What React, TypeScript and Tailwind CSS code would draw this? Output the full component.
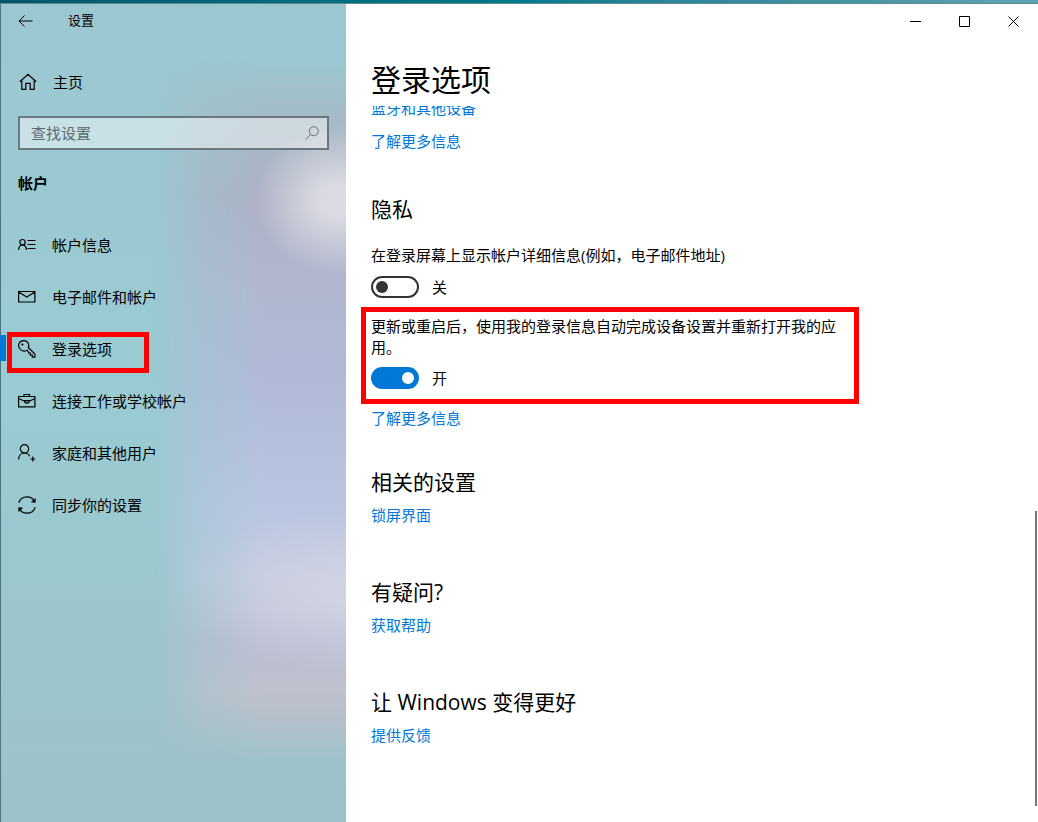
import { ReactNode, useState } from "react";

const navItems = [
  { label: "帐户信息", icon: <AccountIcon /> },
  { label: "电子邮件和帐户", icon: <MailIcon /> },
  { label: "登录选项", icon: <KeyIcon />, active: true },
  { label: "连接工作或学校帐户", icon: <BriefcaseIcon /> },
  { label: "家庭和其他用户", icon: <FamilyIcon /> },
  { label: "同步你的设置", icon: <SyncIcon /> },
];

function Icon({ children }: { children: ReactNode }) {
  return (
    <svg
      width="18"
      height="18"
      viewBox="0 0 18 18"
      fill="none"
      stroke="currentColor"
      strokeWidth="1.2"
      aria-hidden="true"
      className="shrink-0"
    >
      {children}
    </svg>
  );
}

function AccountIcon() {
  return (
    <Icon>
      <circle cx="4.5" cy="6.2" r="2.7" />
      <path d="M.6 14c0-2.800 1.600-5.100 3.900-5.100S8.400 11.200 8.400 14M9.500 4.500h8M9.500 8.500h8M9.500 12.500h8" />
    </Icon>
  );
}

function MailIcon() {
  return (
    <Icon>
      <path d="M.6 3.500h16.300v10.500H.6zM.6 4 8.800 9l8.100-5" />
    </Icon>
  );
}

function KeyIcon() {
  return (
    <Icon>
      <path d="M9.300 10.200c-3 1.500-6.200.7-7.800-1.900C-.2 5.600.800 2.300 3.400 1.100c2.700-1.300 5.900-.2 7 2.500.5 1.400.4 2.700-.1 3.900l6.600 6.600v3h-2.600v-2h-1.900v-2h-1.400z" />
      <circle cx="4.400" cy="4.600" r="1.100" fill="currentColor" stroke="none" />
    </Icon>
  );
}

function BriefcaseIcon() {
  return (
    <Icon>
      <path d="M.6 4.500h16.300v10.300H.6zM6 4.500v-2h5.500v2M.6 6.500l6 2.700M16.900 6.500l-5.700 2.700" />
      <path d="M6.500 8.600h4.700c0 1.600-1 2.600-2.350 2.600S6.500 10.200 6.500 8.600z" />
    </Icon>
  );
}

function FamilyIcon() {
  return (
    <Icon>
      <circle cx="6.500" cy="4.800" r="4.200" />
      <path d="M.6 15.500C.7 11.800 3 9 6.500 9c2.300 0 4.200 1.200 5.200 3.200M14.800 12.500v5M12.300 15h5" />
    </Icon>
  );
}

function SyncIcon() {
  return (
    <Icon>
      <path d="M.8 6.700C2 3.100 5.200.8 9 .8c3.600 0 6.600 2 8 5.200M17.200 11.300c-1.200 3.600-4.400 5.900-8.200 5.900-3.600 0-6.600-2-8-5.200" />
      <path d="m17.400 2.500-.2 4-3.800-.6zM.6 15.500l.2-4 3.800.6z" fill="currentColor" strokeWidth=".5" />
    </Icon>
  );
}

function Toggle({ id, initial }: { id: string; initial: boolean }) {
  const [on, setOn] = useState(initial);

  return (
    <label htmlFor={id} className="flex w-fit items-center gap-[13px] leading-[22px]">
      <input
        id={id}
        type="checkbox"
        checked={on}
        onChange={() => setOn(!on)}
        className="flex h-[22px] w-12 shrink-0 appearance-none items-center rounded-full border-2 border-[#333] px-[3px] before:size-3 before:rounded-full before:bg-[#333] checked:justify-end checked:border-[#0078d7] checked:bg-[#0078d7] checked:before:bg-white"
      />
      {on ? "开" : "关"}
    </label>
  );
}

function TextLink({ children }: { children: ReactNode }) {
  return (
    <a href="#" className="block w-fit leading-5 text-[#0078d7] hover:text-gray-500">
      {children}
    </a>
  );
}

function Section({ title, link }: { title: string; link: string }) {
  return (
    <section className="mb-[52px]">
      <h2 className="mb-2 text-[21px] leading-[30px]">{title}</h2>
      <TextLink>{link}</TextLink>
    </section>
  );
}

function Sidebar() {
  return (
    <aside className="relative w-1/3 shrink-0 border-l border-[#4c7780] bg-linear-to-b from-[#9bc7d1] via-[#9acbd2] to-[#9dc1c9]">
      {/* acrylic tint showing the wallpaper */}
      <div className="absolute inset-0 bg-[radial-gradient(85px_75px_at_98%_24%,#dbdce3_0%,#d8d9e1_25%,transparent_100%),radial-gradient(170px_80px_at_100%_72%,#d2d4e2_0%,transparent_100%),linear-gradient(to_bottom,transparent_7%,#a5bac5_14%,#adb0c5_24%,#b0b7ce_34%,#b0bad7_46%,#bac6e1_62%,#c1c9e0_70%,#babdd2_78%,#bfc1cd_84%,#b1c0ca_88%,transparent_93%)] [mask-image:linear-gradient(to_right,transparent_44%,rgb(0_0_0/.6)_58%,black_76%)]" />
      <div className="relative">
        <div className="flex h-[34px] items-center pl-[17px] text-[13px]">
          <button type="button" aria-label="返回" className="mr-[35px]">
            <svg width="15" height="12" viewBox="0 0 15 12" fill="none" stroke="currentColor" aria-hidden="true">
              <path d="M14.500 6H1M6.500.5 1 6l5.500 5.500" />
            </svg>
          </button>
          <span>设置</span>
        </div>

        <a href="#" className="mt-6 flex h-10 items-center gap-4 pl-[18px]">
          <Icon>
            <path d="M.8 8.800 9 1.300l8.200 7.500M2.800 7.200v9.200h4v-6h4.400v6h4V7.200" />
          </Icon>
          主页
        </a>

        <div className="mx-[17px] mt-3.5 flex h-[34px] items-center border-2 border-[#6b7680] bg-white/45 pr-2 pl-[11px]">
          <input
            type="search"
            aria-label="查找设置"
            placeholder="查找设置"
            className="w-full min-w-0 outline-none placeholder:text-[#5d6b70]"
          />
          <svg width="14" height="14" viewBox="0 0 14 14" fill="none" stroke="#6b7178" aria-hidden="true" className="shrink-0">
            <circle cx="8.800" cy="5.200" r="4.500" />
            <path d="M5.500 8.500.5 13.500" />
          </svg>
        </div>

        <h2 className="mt-[22px] pl-[17px] leading-[22px] font-bold">帐户</h2>

        <nav className="mt-[25px]">
          {navItems.map((item) => (
            <a key={item.label} href="#" className="relative flex h-[52px] items-center gap-4 pl-[17px]">
              {item.active && (
                <>
                  <span className="absolute top-3 -left-px h-[26px] w-1.5 bg-[#0078d7]" />
                  <span className="absolute top-[9px] left-1.5 h-[41px] w-[142px] border-[5px] border-[#f00]" />
                </>
              )}
              <span className="relative">{item.icon}</span>
              <span className="relative">{item.label}</span>
            </a>
          ))}
        </nav>
      </div>
    </aside>
  );
}

function WindowControls() {
  return (
    <div className="flex h-[34px] justify-end">
      <button type="button" aria-label="最小化" className="flex w-[49px] items-center justify-center">
        <svg width="11" height="11" viewBox="0 0 11 11" stroke="currentColor" aria-hidden="true">
          <path d="M0 5.500h11" />
        </svg>
      </button>
      <button type="button" aria-label="最大化" className="flex w-[49px] items-center justify-center">
        <svg width="11" height="11" viewBox="0 0 11 11" fill="none" stroke="currentColor" aria-hidden="true">
          <path d="M.5.5h10v10H.5z" />
        </svg>
      </button>
      <button type="button" aria-label="关闭" className="flex w-[49px] items-center justify-center">
        <svg width="11" height="11" viewBox="0 0 11 11" stroke="currentColor" aria-hidden="true">
          <path d="m.5.5 10 10M10.500.5l-10 10" />
        </svg>
      </button>
    </div>
  );
}

export default function App() {
  return (
    <div className="flex min-h-screen flex-col bg-white font-['Open_Sans','Noto_Sans_CJK_SC',sans-serif] text-[15px] text-black">
      <div className="h-[3px] bg-linear-to-r from-[#00566c] via-[#007a8c] to-[#5fa3b0]" />
      <div className="flex grow border-t border-[#5f8a94]">
        <Sidebar />
        <main className="relative flex min-w-0 grow flex-col">
          <WindowControls />
          <h1 className="mt-[22px] pl-[25px] text-[30px] leading-[40px]">登录选项</h1>

          {/* list is scrolled, its first link slides under the title */}
          <div className="mt-1.5 overflow-hidden px-[25px]">
            <div className="-mt-2 mb-[43px] flex flex-col gap-[13px]">
              <TextLink>蓝牙和其他设备</TextLink>
              <TextLink>了解更多信息</TextLink>
            </div>

            <section className="mb-[39px]">
              <h2 className="mb-[21px] text-[21px] leading-[30px]">隐私</h2>
              <p className="mb-2.5 leading-[21px]">在登录屏幕上显示帐户详细信息(例如，电子邮件地址)</p>
              <Toggle id="show-details" initial={false} />
              <div className="mt-[9px] mb-1 -ml-2.5 max-w-[498px] border-[5px] border-[#f00] px-[5px] pt-1 pb-2.5">
                <p className="mb-[9px] leading-[21px]">更新或重启后，使用我的登录信息自动完成设备设置并重新打开我的应用。</p>
                <Toggle id="auto-finish" initial={true} />
              </div>
              <TextLink>了解更多信息</TextLink>
            </section>

            <Section title="相关的设置" link="锁屏界面" />
            <Section title="有疑问?" link="获取帮助" />
            <Section title="让 Windows 变得更好" link="提供反馈" />
          </div>

          <div className="absolute top-[62%] right-px bottom-4 w-0.5 bg-[#767676]" />
        </main>
      </div>
    </div>
  );
}
